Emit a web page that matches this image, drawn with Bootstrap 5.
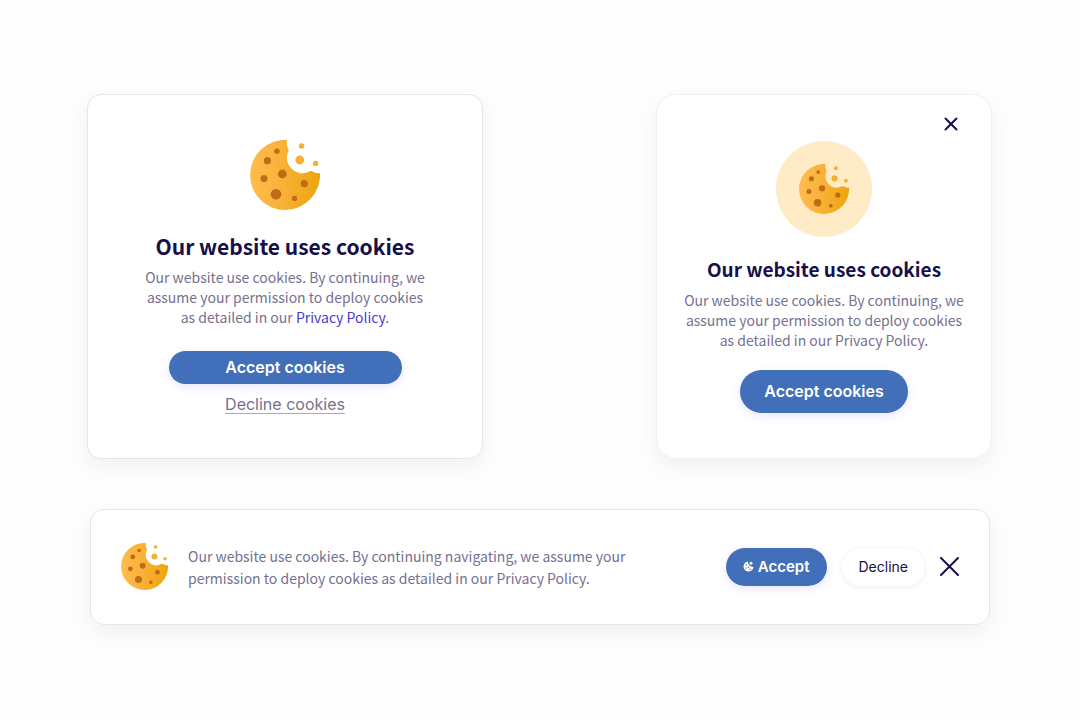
<!DOCTYPE html>
<html lang="en">
<head>
<meta charset="utf-8">
<meta name="viewport" content="width=device-width, initial-scale=1">
<title>Cookie consent</title>
<link href="https://cdn.jsdelivr.net/npm/bootstrap@5.3.0/dist/css/bootstrap.min.css" rel="stylesheet">
<style>
  body { background: #fdfdfd; color: #75718f; font-family: "Noto Sans CJK SC", "Noto Sans", sans-serif; font-size: 14px; line-height: 20px; }
  .page { padding: 94px 88px 48px 87px; }
  .consent { background: #fff; border: 1px solid #e6e6ea; border-radius: 14px; box-shadow: 0 8px 20px rgba(0, 0, 0, .05); }
  .consent-wide { width: 396px; padding: 45px 48px 44px; }
  .consent-round { width: 336px; padding: 46px 20px 45px; border-color: #f1f1f3; border-radius: 20px; }
  .consent-bar { margin: 50px 2px 0 3px; padding: 33px 30px 34px; }
  .consent-title { color: #170f49; font-size: 21px; line-height: 28px; font-weight: 600; margin: 22px 0 7px; }
  .consent-round .consent-title { font-size: 19px; line-height: 30px; margin: 17px 0 6px; }
  .consent-text { margin-bottom: 24px; }
  .consent-round .consent-text { margin-bottom: 20px; }
  .policy-link { color: #4a3ad0; text-decoration: none; }
  .bar-text { line-height: 22px; }
  .pill { --bs-btn-bg: #426fb9; --bs-btn-color: #fff; --bs-btn-border-color: transparent; --bs-btn-hover-bg: #365fa2; --bs-btn-hover-color: #fff; border: 0; font-family: Inter, sans-serif; font-weight: 600; font-size: 16px; line-height: 20px; box-shadow: 0 3px 8px rgba(74, 58, 255, .13); }
  .pill-slim { width: 233px; padding: 6px 16px 7px; }
  .pill-tall { width: 168px; padding: 11px 16px 12px; }
  .pill-small { padding: 9px 17px; font-size: 15px; }
  .pill-light { --bs-btn-bg: #fff; --bs-btn-color: #170f49; font-size: 14px; font-weight: 400; box-shadow: 0 0 0 1px #f6f6fa, 0 2px 5px rgba(74, 58, 255, .09); }
  .decline-link { color: #75718f; font-family: Inter, sans-serif; font-size: 16px; font-weight: 400; text-underline-offset: 3px; text-decoration-color: #aaa8bb; line-height: 20px; margin-top: 10px; }
  .halo { width: 96px; height: 96px; background: #ffecc6; }
  .close-icon { color: #170f49; line-height: 0; }
  .close-corner { top: 22px; right: 33px; }
  .bar-actions { gap: 15px; }
  svg { display: block; }
</style>
</head>
<body>
<svg width="0" height="0" class="position-absolute" aria-hidden="true">
  <defs>
    <linearGradient id="dough" x1="0" y1="0" x2="1" y2="0">
      <stop offset="0" stop-color="#ffbc4f"/><stop offset=".5" stop-color="#f8b035"/><stop offset="1" stop-color="#eba50c"/>
    </linearGradient>
    <symbol id="cookie" viewBox="0 0 70 70">
      <path fill="url(#dough)" d="M37 0A35 35 0 1 0 70 33C67 33.500 65 33 63.500 32C61.500 30.500 59.500 31 57.500 32.300C54 33.800 50 33.800 46 31.800C40 28.500 37.500 24 37 19C36.700 15 37.500 13 38.500 11C39 9.500 38 8.500 37.500 7C36.500 4.500 36.800 2 37 0Z"/>
      <g fill="#c06c15">
        <circle cx="27" cy="11.300" r="2.700"/><circle cx="17.400" cy="20.700" r="3.600"/><circle cx="32.300" cy="34" r="4.400"/>
        <circle cx="14" cy="38.400" r="3.500"/><circle cx="54.300" cy="43.600" r="3.600"/><circle cx="26" cy="54.300" r="5.300"/><circle cx="44.500" cy="58.400" r="2.700"/>
      </g>
      <g fill="#f5b033">
        <circle cx="51.600" cy="6" r="2.700"/><circle cx="49.800" cy="20" r="4.400"/><circle cx="65.600" cy="23.500" r="2.700"/>
      </g>
    </symbol>
  </defs>
</svg>

<main class="page">
  <div class="d-flex justify-content-between align-items-stretch">
    <section class="consent consent-wide d-flex flex-column align-items-center text-center">
      <svg width="70" height="70" aria-hidden="true"><use href="#cookie"/></svg>
      <h2 class="consent-title">Our website uses cookies</h2>
      <p class="consent-text">Our website use cookies. By continuing, we assume your permission to deploy cookies<br>as detailed in our <a class="policy-link" href="#privacy">Privacy Policy</a>.</p>
      <button type="button" class="btn pill pill-slim rounded-pill">Accept cookies</button>
      <button type="button" class="btn btn-link decline-link border-0 p-0">Decline cookies</button>
    </section>

    <section class="consent consent-round position-relative d-flex flex-column align-items-center text-center">
      <button type="button" class="btn close-icon close-corner position-absolute border-0 p-0" aria-label="Close">
        <svg width="14" height="14" viewBox="0 0 14 14" fill="none" stroke="currentColor" stroke-width="2" stroke-linecap="round"><path d="M1.500 1.500l11 11M12.500 1.500l-11 11"/></svg>
      </button>
      <div class="halo rounded-circle d-flex align-items-center justify-content-center">
        <svg width="50" height="50" aria-hidden="true"><use href="#cookie"/></svg>
      </div>
      <h2 class="consent-title">Our website uses cookies</h2>
      <p class="consent-text">Our website use cookies. By continuing, we assume your permission to deploy cookies<br>as detailed in our Privacy Policy.</p>
      <button type="button" class="btn pill pill-tall rounded-pill">Accept cookies</button>
    </section>
  </div>

  <section class="consent consent-bar d-flex align-items-center">
    <svg class="flex-shrink-0" width="47" height="47" aria-hidden="true"><use href="#cookie"/></svg>
    <p class="bar-text mb-0 ms-3 me-auto ps-1">Our website use cookies. By continuing navigating, we assume your<br>permission to deploy cookies as detailed in our Privacy Policy.</p>
    <div class="bar-actions d-flex align-items-center">
      <button type="button" class="btn pill pill-small rounded-pill d-flex align-items-center gap-1">
        <svg width="11" height="11" viewBox="0 0 22 22" aria-hidden="true"><path fill="#fff" d="M10 1A10 10 0 1 0 21 11Q18 13 15.500 10Q11 10 11.500 6Q9 4 10 1Z"/><g fill="#426fb9"><circle cx="6.500" cy="7.500" r="1.500"/><circle cx="6" cy="14" r="1.300"/><circle cx="11" cy="12.500" r="1.400"/><circle cx="14" cy="16.500" r="1.400"/></g><circle cx="16" cy="4.500" r="3" fill="#fff"/></svg>
        Accept
      </button>
      <button type="button" class="btn pill pill-small pill-light rounded-pill">Decline</button>
      <button type="button" class="btn close-icon border-0 p-0" aria-label="Close">
        <svg width="19" height="19" viewBox="0 0 19 19" fill="none" stroke="currentColor" stroke-width="2" stroke-linecap="round"><path d="M1 1l17 17M18 1l-17 17"/></svg>
      </button>
    </div>
  </section>
</main>
<script src="https://cdn.jsdelivr.net/npm/bootstrap@5.3.0/dist/js/bootstrap.bundle.min.js"></script>
</body>
</html>
